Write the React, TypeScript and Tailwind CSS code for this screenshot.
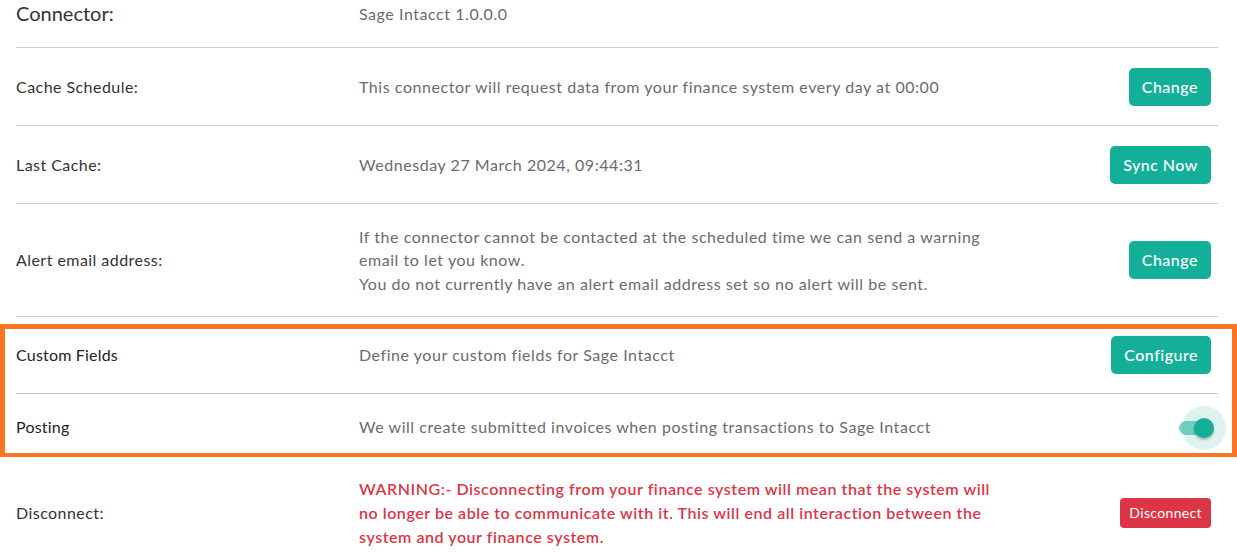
import React from "react";

const font = { fontFamily: "Lato, 'Noto Sans', sans-serif" };

function TealButton({ children }: { children: React.ReactNode }) {
  return (
    <button className="h-[38px] px-[13px] rounded-[5px] bg-[#14af99] text-white text-[16px] tracking-[0.5px] leading-none font-medium">
      {children}
    </button>
  );
}

function Row({
  label,
  children,
  action,
  h,
  labelClass = "text-[16px] text-[#333] tracking-[0.45px]",
}: {
  label: string;
  children: React.ReactNode;
  action?: React.ReactNode;
  h: string;
  labelClass?: string;
}) {
  return (
    <div className={`grid grid-cols-[343px_1fr_auto] items-center pr-[7px] ${h}`}>
      <div className={labelClass}>{label}</div>
      <div className="text-[16px] text-[#6b6b6b] leading-[23.5px] tracking-[0.55px]">{children}</div>
      <div className="flex justify-end">{action}</div>
    </div>
  );
}

export default function App() {
  return (
    <div className="w-[1237px] h-[555px] overflow-hidden bg-white" style={font}>
      <div className="ml-[16px] mr-[19px]">
        <div className="grid grid-cols-[343px_1fr] items-start h-[48px] border-b border-[#cccccc]">
          <div className="text-[20px] text-[#333] leading-none mt-[3px]">Connector:</div>
          <div className="text-[16px] text-[#6b6b6b] leading-none mt-[6px] tracking-[0.55px]">Sage Intacct 1.0.0.0</div>
        </div>
        <div className="border-b border-[#cccccc]">
          <Row label="Cache Schedule:" h="h-[77px]" action={<TealButton>Change</TealButton>}>
            This connector will request data from your finance system every day at 00:00
          </Row>
        </div>
        <div className="border-b border-[#cccccc]">
          <Row label="Last Cache:" h="h-[77px]" action={<TealButton>Sync Now</TealButton>}>
            Wednesday 27 March 2024, 09:44:31
          </Row>
        </div>
        <div className="border-b border-[#cccccc]">
          <Row label="Alert email address:" h="h-[112px]" action={<TealButton>Change</TealButton>}>
            <span className="block whitespace-nowrap">
              If the connector cannot be contacted at the scheduled time we can send a warning
            </span>
            <span className="block whitespace-nowrap">email to let you know.</span>
            <span className="block whitespace-nowrap">
              You do not currently have an alert email address set so no alert will be sent.
            </span>
          </Row>
        </div>
      </div>

      <div className="mt-[7px] border-[5px] border-b-[4px] border-[#fd7423] pl-[11px] pr-[14px]">
        <div className="border-b border-[#cccccc]">
          <Row
            label="Custom Fields"
            h="h-[52px] mb-[12px]"
            labelClass="text-[16px] text-[#222] tracking-[0.2px]"
            action={<TealButton>Configure</TealButton>}
          >
            Define your custom fields for Sage Intacct
          </Row>
        </div>
        <Row
          label="Posting"
          h="h-[59px] pt-[6px]"
          labelClass="text-[16px] text-[#222] tracking-[0.2px]"
          action={
            <div className="relative w-[34px] h-[14px] mr-[-2px] mt-[2px]">
              <div className="absolute inset-0 rounded-full bg-[#7dd3c6]" />
              <div className="absolute right-[-1px] top-1/2 -translate-y-1/2 w-[20px] h-[20px]">
                <div className="absolute inset-[-12px] rounded-full bg-[#14af99]/15" />
                <div className="absolute inset-0 rounded-full bg-[#14af99] shadow-[0_2px_2px_rgba(0,0,0,0.25)]" />
              </div>
            </div>
          }
        >
          We will create submitted invoices when posting transactions to Sage Intacct
        </Row>
      </div>

      <div className="ml-[16px] mr-[19px]">
        <div className="grid grid-cols-[343px_1fr_auto] items-center pr-[7px] pt-[20px]">
          <div className="text-[16px] text-[#333] tracking-[0.45px]">Disconnect:</div>
          <div className="text-[16px] text-[#dc3545] font-semibold leading-[24px] tracking-[0.55px]">
            <span className="block whitespace-nowrap">
              WARNING:- Disconnecting from your finance system will mean that the system will
            </span>
            <span className="block whitespace-nowrap">
              no longer be able to communicate with it. This will end all interaction between the
            </span>
            <span className="block whitespace-nowrap">system and your finance system.</span>
          </div>
          <div className="flex justify-end">
            <button className="h-[30px] px-[9px] rounded-[4px] bg-[#dc3545] text-white text-[14px] leading-none tracking-[0.35px]">
              Disconnect
            </button>
          </div>
        </div>
      </div>
    </div>
  );
}
